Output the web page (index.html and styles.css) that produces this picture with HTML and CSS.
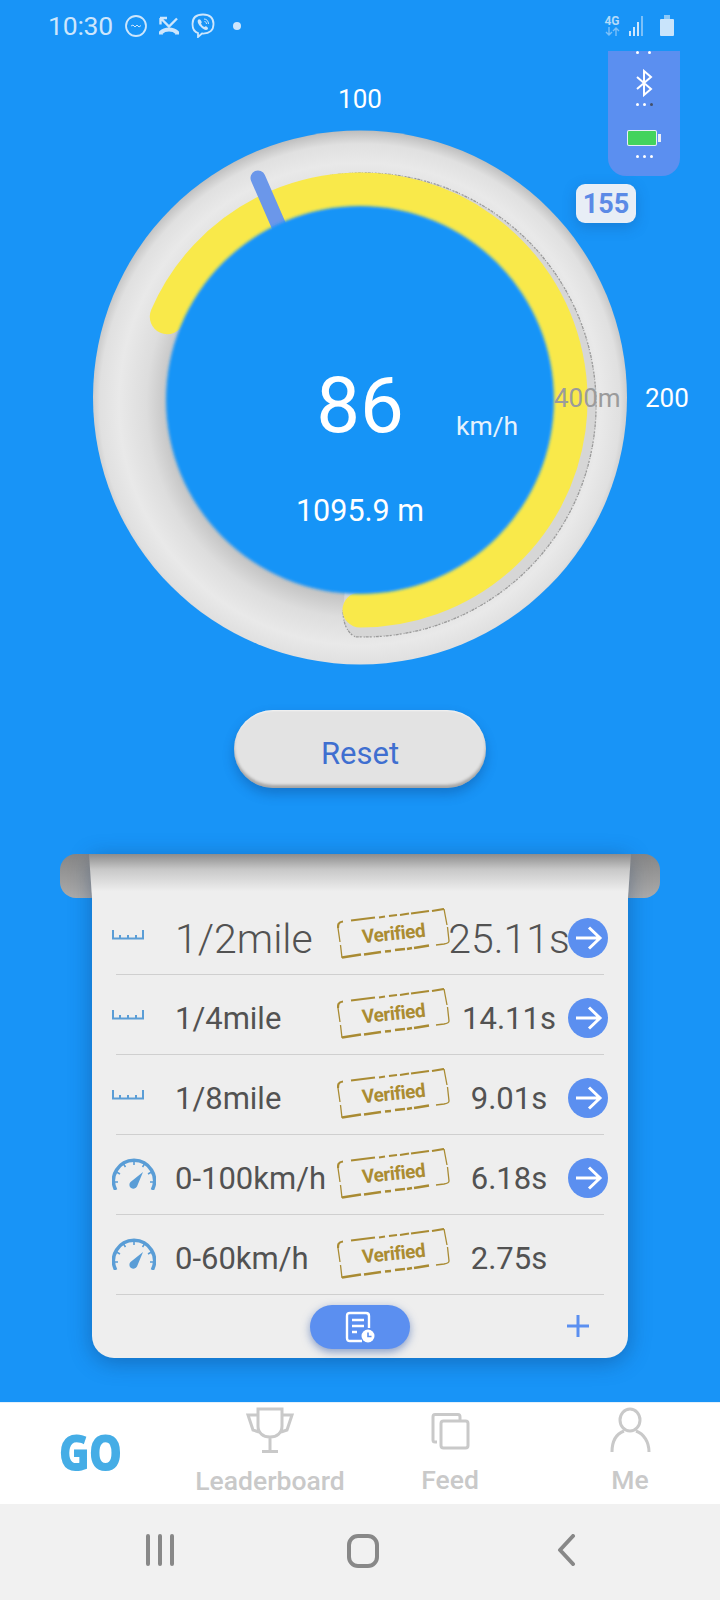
FILE: index.html
```html
<!DOCTYPE html>
<html lang="en">
<head>
<meta charset="utf-8">
<title>Drag timer</title>
<link rel="stylesheet" href="styles.css">
</head>
<body>
<svg class="defs" width="0" height="0" aria-hidden="true">
  <defs>
    <symbol id="ruler" viewBox="0 0 32 12">
      <path class="st-ruler" d="M1 2V10.500H31V2M8 7V10M16 7V10M24 7V10"/>
    </symbol>
    <symbol id="speedo" viewBox="0 0 44 32">
      <path class="st-speedo" d="M3.700 32A20.500 20.500 0 1 1 40.300 32"/>
      <path class="st-tick" d="M22 3V7M11.500 6L13.500 9M32.500 6L30.500 9M4.500 14L8 16M39.500 14L36 16M2.500 24H6M41.500 24H38"/>
      <path class="fill-speedo" d="M31 14L25 28.500A4 4 0 1 1 18.500 24Z"/>
    </symbol>
    <symbol id="arrow" viewBox="0 0 40 40">
      <path class="st-arrow" d="M8 20H31M21 9.500L32 20L21 30.500"/>
    </symbol>
    <symbol id="stamp" viewBox="0 0 113 51">
      <path class="st-stamp-a" d="M1 20C1 17 1 14 6 13.500M14 12.500L38 9.500M42 9.500L48 8.500M52 8L60 7M63 7L72 5.500M74 5.500L92 3M95 3L107 1"/>
      <path class="st-stamp-b" d="M5 49.500L24 46.500M27 46.500L44 44M48 43.500L54 43M58 42L68 41M70 41L75 40M77 40L92 37.500"/>
      <path class="st-stamp-c" d="M1 20L3 34M3.500 37L5 50M107 1L110 17M110.500 19L112 33M112 33C112 35 110 35.500 107 36L99 37"/>
    </symbol>
  </defs>
</svg>

<header class="status">
  <span class="clock">10:30</span>
  <svg class="st-icon msg" viewBox="0 0 22 22"><circle cx="11" cy="11" r="10"/><path class="thin" d="M6 11L8 10L10 12L12 10L14 12L16 10.500"/></svg>
  <svg class="st-icon call" viewBox="0 0 22 20"><path d="M2.500 2V8.500M2 2H9M2.500 2L11 10.500L19 2.500"/><path class="fat" d="M3 18.500V16.500C7 12.500 15 12.500 19 16.500V18.500"/></svg>
  <svg class="st-icon viber" viewBox="0 0 24 25"><path d="M12 1.500C5 1.500 1.500 5 1.500 11C1.500 16 3.500 19 7 20V24L11 20.500C19 21 22.500 17 22.500 11C22.500 5 19 1.500 12 1.500Z"/><path class="solid" d="M7.500 6.500C6 7.500 6.500 10.500 9.500 13.500C12 16.500 15 17.500 16.500 16.500C17.500 15.500 17 14.500 15.500 13.500C14.500 13 14 13.500 13.500 14C12 13.500 10.500 12 10 10.500C10.500 10 11 9.500 10.500 8.500C9.500 6.500 8.500 6 7.500 6.500Z"/><path class="thin" d="M13 6C15.500 6 17.500 8 17.500 11M13.500 8.500C14.500 8.500 15.500 9.500 15.500 11"/></svg>
  <span class="dot"></span>
  <span class="status-right">
    <span class="net"><span class="net-text">4G</span><svg class="net-arrows" viewBox="0 0 15 9"><path d="M4 0V8M1 5L4 8L7 5M11 9V1M8 4L11 1L14 4"/></svg></span>
    <svg class="signal" viewBox="0 0 16 20"><rect class="sig-on" x="0" y="15" width="2" height="5"/><rect class="sig-on" x="4" y="11" width="2" height="9"/><rect class="sig-on" x="8" y="6" width="2" height="14"/><rect class="sig-off" x="12" y="0" width="2" height="20"/></svg>
    <svg class="batt" viewBox="0 0 14 21"><rect class="batt-cap" x="4" y="0" width="6" height="4"/><rect class="batt-body" x="0" y="4" width="14" height="17" rx="1"/></svg>
  </span>
</header>

<section class="gauge">
  <svg class="dial" viewBox="0 51 720 659" width="720" height="659">
    <defs>
      <radialGradient id="ring" gradientUnits="userSpaceOnUse" cx="360" cy="404" r="274">
        <stop offset=".7" stop-color="#c4c4c4"/>
        <stop offset=".78" stop-color="#dddddd"/>
        <stop offset=".88" stop-color="#e9e9e9"/>
        <stop offset=".95" stop-color="#e0e0e0"/>
        <stop offset="1" stop-color="#bcbcbc"/>
      </radialGradient>
      <filter id="soft" x="-10%" y="-10%" width="120%" height="120%"><feGaussianBlur stdDeviation="1.800"/></filter>
    </defs>
    <circle cx="360" cy="397.500" r="267" fill="url(#ring)"/>
    <path class="band" d="M340 174.250A232 232 0 1 1 355 636.800Q343 630 343 610L345 589.400A190 190 0 0 0 340 211Z"/>
    <path class="band-edge" d="M328 175.800A232 232 0 1 1 355 636.800Q343 630 343 610"/>
    <path class="yellow" d="M167.300 316.700A210 210 0 1 1 360 610"/>
    <path class="pointer" d="M258 178L285 240"/>
    <circle class="hole" cx="360" cy="400" r="194" filter="url(#soft)"/>
  </svg>
  <span class="tick tick-100">100</span>
  <span class="tick tick-200">200</span>
  <span class="tick tick-400">400m</span>
  <span class="speed">86</span>
  <span class="unit">km/h</span>
  <span class="dist">1095.9 m</span>

  <aside class="device">
    <span class="dots dots-top"><i></i><i></i></span>
    <svg class="bt" viewBox="0 0 20 28"><path d="M3 8L17 20L10 26V2L17 8L3 20"/></svg>
    <span class="dots dots-bt"><i></i><i></i><i class="off"></i></span>
    <svg class="dev-batt" viewBox="0 0 36 18"><rect class="b-shell" x="1" y="1" width="30" height="16" rx="2"/><rect class="b-fill" x="2" y="2" width="28" height="14" rx="1"/><rect class="b-cap" x="32" y="5" width="3" height="8"/></svg>
    <span class="dots dots-batt"><i></i><i></i><i></i></span>
  </aside>
  <span class="badge">155</span>
</section>

<button class="reset" type="button">Reset</button>

<section class="sheet">
  <div class="roller"></div>
  <div class="card">
    <div class="fold"></div>

    <div class="row big">
      <svg class="ic-ruler"><use href="#ruler"/></svg>
      <span class="name">1/2mile</span>
      <span class="stampbox"><svg class="stamp-art"><use href="#stamp"/></svg><span class="stamp-text">Verified</span></span>
      <span class="time">25.11s</span>
      <svg class="go"><use href="#arrow"/></svg>
    </div>
    <div class="sep"></div>

    <div class="row">
      <svg class="ic-ruler"><use href="#ruler"/></svg>
      <span class="name">1/4mile</span>
      <span class="stampbox"><svg class="stamp-art"><use href="#stamp"/></svg><span class="stamp-text">Verified</span></span>
      <span class="time">14.11s</span>
      <svg class="go"><use href="#arrow"/></svg>
    </div>
    <div class="sep"></div>

    <div class="row">
      <svg class="ic-ruler"><use href="#ruler"/></svg>
      <span class="name">1/8mile</span>
      <span class="stampbox"><svg class="stamp-art"><use href="#stamp"/></svg><span class="stamp-text">Verified</span></span>
      <span class="time">9.01s</span>
      <svg class="go"><use href="#arrow"/></svg>
    </div>
    <div class="sep"></div>

    <div class="row">
      <svg class="ic-speedo"><use href="#speedo"/></svg>
      <span class="name">0-100km/h</span>
      <span class="stampbox"><svg class="stamp-art"><use href="#stamp"/></svg><span class="stamp-text">Verified</span></span>
      <span class="time">6.18s</span>
      <svg class="go"><use href="#arrow"/></svg>
    </div>
    <div class="sep"></div>

    <div class="row">
      <svg class="ic-speedo"><use href="#speedo"/></svg>
      <span class="name">0-60km/h</span>
      <span class="stampbox"><svg class="stamp-art"><use href="#stamp"/></svg><span class="stamp-text">Verified</span></span>
      <span class="time">2.75s</span>
    </div>
    <div class="sep"></div>

    <div class="foot">
      <button class="history" type="button" aria-label="History">
        <svg viewBox="0 0 30 32" class="doc"><path d="M17 30H5C3 30 2 29 2 27V5C2 3 3 2 5 2H21C23 2 24 3 24 5V17"/><path d="M7 9H19M7 15H19M7 21H12"/><circle class="clock-face" cx="23" cy="25" r="6.500"/><path class="clock-hand" d="M23 21.500V25.500H26.500"/></svg>
      </button>
      <svg class="plus" viewBox="0 0 24 24"><path d="M12 1V23M1 12H23"/></svg>
    </div>
  </div>
</section>

<div class="grow"></div>

<nav class="tabs">
  <div class="tab tab-go"><span class="go-text">GO</span></div>
  <div class="tab">
    <svg class="tab-ic" viewBox="0 0 48 48"><path d="M12 3H36V20C36 27 31 31 24 31C17 31 12 27 12 20ZM12 9H2L7 24L13 26M36 9H46L41 24L35 26M24 31V45M16 45.500H32"/></svg>
    <span class="tab-label">Leaderboard</span>
  </div>
  <div class="tab">
    <svg class="tab-ic" viewBox="0 0 48 48"><path d="M11 36H9C7.500 36 7 35 7 34V11C7 9.500 7.500 8.500 9 8.500H32C33.500 8.500 34 9.500 34 11V14"/><rect x="15" y="15" width="27" height="27" rx="2.500"/></svg>
    <span class="tab-label tab-label-up">Feed</span>
  </div>
  <div class="tab">
    <svg class="tab-ic" viewBox="0 0 48 48"><ellipse cx="24" cy="14" rx="10" ry="11"/><path d="M18 25C10 28 6 36 6 46M30 25C38 28 43 36 43 46"/></svg>
    <span class="tab-label tab-label-up">Me</span>
  </div>
</nav>

<footer class="sysnav">
  <svg class="sys sys-menu" viewBox="0 0 30 32"><path d="M3 2V30M15 2V30M27 2V30"/></svg>
  <svg class="sys sys-home" viewBox="0 0 32 34"><rect x="2" y="2" width="28" height="30" rx="9"/></svg>
  <svg class="sys sys-back" viewBox="0 0 20 32"><path d="M16 2L3 16L16 30"/></svg>
</footer>
</body>
</html>
```
FILE: styles.css
```css
* { box-sizing: border-box; }
html, body { margin: 0; padding: 0; }
body {
  width: 720px;
  height: 1600px;
  overflow: hidden;
  background: #1894f7;
  font-family: Roboto, "Liberation Sans", sans-serif;
  display: flex;
  flex-direction: column;
}
.defs { position: absolute; }
svg { display: block; fill: none; }

/* status bar */
.status {
  height: 51px;
  display: flex;
  align-items: center;
  padding: 0 46px 0 48px;
  color: #cde6fc;
}
.clock { font-size: 26.500px; width: 77px; letter-spacing: -.2px; }
.st-icon { stroke: #cde6fc; stroke-width: 1.800; }
.st-icon .thin { stroke-width: 1; }
.st-icon .fat { stroke-width: 4; }
.st-icon .solid { fill: #cde6fc; stroke: none; }
.msg { width: 22px; height: 22px; margin-right: 11px; }
.call { width: 22px; height: 20px; margin-right: 11px; stroke-width: 2.400; }
.viber { width: 24px; height: 25px; margin-right: 18px; }
.dot { width: 8px; height: 8px; border-radius: 50%; background: #cde6fc; }
.status-right { margin-left: auto; display: flex; align-items: center; }
.net { width: 16px; margin-right: 9px; display: flex; flex-direction: column; align-items: center; color: #b4daf9; }
.net-text { font-size: 12px; line-height: 12px; font-weight: 700; }
.net-arrows { width: 15px; height: 9px; stroke: #7cc0f8; stroke-width: 1.400; }
.signal { width: 16px; height: 20px; margin-right: 15px; }
.sig-on { fill: #cde6fc; }
.sig-off { fill: #7cc0f8; }
.batt { width: 14px; height: 21px; }
.batt-cap { fill: #8cc8f8; }
.batt-body { fill: #c9e4fb; }

/* gauge */
.gauge { position: relative; height: 659px; color: #fff; }
.dial { position: absolute; left: 0; top: 0; }
.band { fill: #d6d6d6; }
.band-edge { stroke: #9a9a9a; stroke-width: 1.300; stroke-dasharray: 3 1 1 2 2 1; }
.yellow { stroke: #f9e94a; stroke-width: 35; stroke-linecap: round; }
.pointer { stroke: #6b97ea; stroke-width: 15; stroke-linecap: round; }
.hole { fill: #1894f7; }
.tick, .speed, .unit, .dist { position: absolute; line-height: 30px; white-space: nowrap; }
.tick { font-size: 26px; }
.tick-100 { left: 320px; width: 80px; top: 33px; text-align: center; }
.tick-200 { left: 645px; top: 332px; }
.tick-400 { left: 554px; top: 332px; color: #9b9b9b; }
.speed { left: 260px; width: 200px; top: 310px; line-height: 90px; font-size: 78px; text-align: center; }
.unit { left: 456px; top: 360px; font-size: 26.500px; color: #e6f2fd; }
.dist { left: 260px; width: 200px; top: 443px; font-size: 30.500px; line-height: 34px; text-align: center; }

.device {
  position: absolute;
  left: 608px;
  top: 0;
  width: 72px;
  height: 125px;
  background: #5b8ff0;
  border-radius: 0 0 18px 18px;
  display: flex;
  flex-direction: column;
  align-items: center;
}
.dots { display: flex; gap: 4px; height: 4px; }
.dots i { width: 3px; height: 3px; background: #fff; border-radius: 50%; }
.dots i.off { background: #44506a; }
.dots-top { gap: 9px; margin-left: -1px; }
.bt { width: 20px; height: 28px; margin-top: 14px; stroke: #fff; stroke-width: 2; }
.dots-bt { margin-top: 6px; }
.dev-batt { width: 36px; height: 18px; margin-top: 22px; }
.b-shell { fill: #e9eef7; }
.b-fill { fill: #43d35c; }
.b-cap { fill: #e9eef7; }
.dots-batt { margin-top: 8px; }
.badge {
  position: absolute;
  left: 576px;
  top: 133px;
  width: 60px;
  height: 39px;
  background: #e8eef6;
  border-radius: 9px;
  color: #5b8ae6;
  font-size: 27px;
  font-weight: 700;
  line-height: 41px;
  text-align: center;
  box-shadow: 0 4px 14px rgba(20, 60, 120, .25);
}

/* reset */
.reset {
  display: block;
  width: 252px;
  height: 78px;
  margin: 0 auto;
  padding: 9px 0 0;
  border: 0;
  border-radius: 39px;
  background: #e3e3e3;
  color: #3f6fd0;
  font: 400 31px Roboto, sans-serif;
  box-shadow: inset 0 -3px 3px rgba(0, 0, 0, .28), inset 0 1px 2px rgba(255, 255, 255, .6), 0 6px 12px rgba(10, 50, 110, .3);
}

/* sheet */
.sheet { position: relative; width: 536px; height: 504px; margin: 66px auto 0; }
.roller {
  position: absolute;
  left: -32px;
  top: 0;
  width: 600px;
  height: 44px;
  border-radius: 16px;
  background: linear-gradient(#868686, #ababab);
}
.card {
  position: relative;
  height: 504px;
  padding: 41px 20px 0;
  background: #eeeeee;
  border-radius: 0 0 22px 22px;
  box-shadow: 0 4px 22px rgba(15, 50, 100, .4);
}
.fold {
  position: absolute;
  left: -3px;
  right: -3px;
  top: 0;
  height: 44px;
  background: linear-gradient(#8c8c8c, #c8c8c8 35%, #eeeeee 85%);
  clip-path: polygon(0 0, 100% 0, calc(100% - 3px) 100%, 3px 100%);
}
.row {
  position: relative;
  height: 79px;
  display: grid;
  grid-template-columns: 63px 162px 113px 118px 40px;
  align-items: center;
  color: #525252;
  font-size: 31px;
}
.name, .time { margin-top: 8px; white-space: nowrap; }
.time { justify-self: center; }
.big { font-size: 41px; font-weight: 300; }
.ic-ruler { width: 32px; height: 12px; margin-top: -2px; }
.ic-speedo { width: 44px; height: 32px; margin-top: -2px; }
.st-ruler { stroke: #5a9dd6; stroke-width: 2; }
.st-speedo { stroke: #5a9dd6; stroke-width: 3.500; }
.st-tick { stroke: #5a9dd6; stroke-width: 1.600; }
.fill-speedo { fill: #5a9dd6; }
.stampbox {
  position: relative;
  width: 113px;
  height: 51px;
  margin-top: -2px;
  display: flex;
  align-items: center;
  justify-content: center;
}
.stamp-art { position: absolute; left: 0; top: 0; width: 113px; height: 51px; }
.st-stamp-a { stroke: #a98b33; stroke-width: 2.200; }
.st-stamp-b { stroke: #a98b33; stroke-width: 2.600; }
.st-stamp-c { stroke: #a98b33; stroke-width: 1.300; }
.stamp-text {
  color: #ab8c32;
  font-size: 19px;
  font-weight: 700;
  letter-spacing: -.5px;
  transform: rotate(-6deg);
}
.go {
  position: relative;
  width: 40px;
  height: 40px;
  margin-top: 6px;
  background: #5b8ff0;
  border-radius: 50%;
}
.st-arrow { stroke: #fff; stroke-width: 3; }
.sep { height: 1px; margin: 0 4px; background: #cfcfcf; }
.foot {
  display: grid;
  grid-template-columns: 1fr 100px 1fr;
  padding-top: 10px;
  margin: 0 -20px;
}
.history {
  grid-column: 2;
  width: 100px;
  height: 44px;
  padding: 0;
  border: 0;
  border-radius: 22px;
  background: #5b8ff0;
  display: flex;
  align-items: center;
  justify-content: center;
  box-shadow: 0 3px 8px rgba(50, 90, 170, .55);
}
.doc { width: 30px; height: 32px; stroke: #fff; stroke-width: 2.400; }
.clock-face { fill: #fff; stroke: none; }
.clock-hand { stroke: #5b8ff0; stroke-width: 1.600; }
.plus {
  justify-self: end;
  width: 24px;
  height: 24px;
  margin: 9px 38px 0 0;
  stroke: #5b8ff0;
  stroke-width: 3;
}
.grow { flex: 1; }

/* tabs */
.tabs {
  height: 102px;
  display: grid;
  grid-template-columns: repeat(4, 180px);
  background: #fff;
  border-top: 1px solid #e3f0fb;
}
.tab { display: flex; flex-direction: column; align-items: center; padding-top: 3px; }
.tab-go { justify-content: center; padding: 0 0 4px; }
.go-text { color: #45ade6; font: 800 42px/46px "Open Sans", sans-serif; letter-spacing: -1px; transform: scaleY(1.18); }
.tab-ic { width: 48px; height: 48px; stroke: #c9c9c9; stroke-width: 3; }
.tab-label { margin-top: 12px; font-size: 26.500px; line-height: 30px; font-weight: 500; color: #c9c9c9; }
.tab-label-up { margin-top: 11px; }

/* system nav */
.sysnav { position: relative; height: 96px; background: #f1f1f1; display: grid; grid-template-columns: 145px 30px 172px 32px 178px 20px; padding-top: 30px; }
.sys { stroke: #888; stroke-width: 4; stroke-linecap: round; }
.sys-menu { grid-column: 2; width: 30px; height: 32px; }
.sys-home { grid-column: 4; width: 32px; height: 34px; }
.sys-back { grid-column: 6; width: 20px; height: 32px; stroke-linejoin: round; }
```
